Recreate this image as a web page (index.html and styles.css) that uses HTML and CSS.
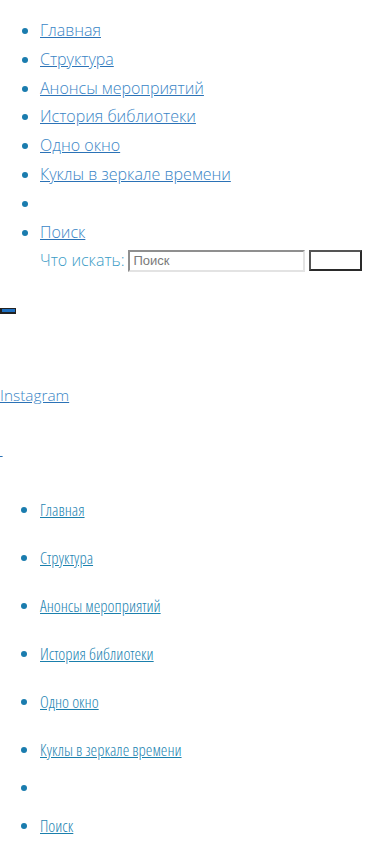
FILE: index.html
```html
<!DOCTYPE html>
<html lang="ru">

<head>
    <meta charset="UTF-8">
    <meta name="viewport" content="width=device-width, initial-scale=1.0">
    <title>Библиотека</title>
    <link rel="stylesheet" href="styles.css">
</head>

<body>
    <ul class="top-menu">
        <li><a href="#">Главная</a></li>
        <li><a href="#">Структура</a></li>
        <li><a href="#">Анонсы мероприятий</a></li>
        <li><a href="#">История библиотеки</a></li>
        <li><a href="#">Одно окно</a></li>
        <li><a href="#">Куклы в зеркале времени</a></li>
        <li></li>
        <li>
            <a href="#">Поиск</a>
            <form class="search">
                <label for="q">Что искать:</label>
                <input id="q" type="text" placeholder="Поиск">
                <button type="submit"></button>
            </form>
        </li>
    </ul>

    <div class="toggle-wrap">
        <button class="toggle" type="button"></button>
    </div>

    <div class="social">
        <a href="#">Instagram</a>
    </div>

    <div class="empty-link">
        <a href="#">&nbsp;</a>
    </div>

    <ul class="main-menu">
        <li><a href="#">Главная</a></li>
        <li><a href="#">Структура</a></li>
        <li><a href="#">Анонсы мероприятий</a></li>
        <li><a href="#">История библиотеки</a></li>
        <li><a href="#">Одно окно</a></li>
        <li><a href="#">Куклы в зеркале времени</a></li>
        <li></li>
        <li><a href="#">Поиск</a></li>
    </ul>
</body>

</html>
```

FILE: styles.css
```css
body {
    margin: 0;
    font-family: "Open Sans", "Liberation Sans", sans-serif;
    font-weight: 300;
    font-size: 16px;
    color: #333;
    background: #fff;
}

a {
    color: #3a85c6;
    text-decoration: underline;
    text-decoration-color: #2b72b6;
}

ul li::marker {
    color: #1a7cae;
}

.top-menu {
    margin: 16px 0;
    padding-left: 40px;
    line-height: 1.8;
}

.search {
    display: flex;
    align-items: center;
    gap: 4px;
    height: 29px;
}

.search label {
    color: #3a9cc6;
}

.search input {
    width: 177px;
    height: 22px;
    box-sizing: border-box;
    margin: 0;
    padding: 1px 3px;
    border: 2px solid #e3e3e3;
    border-top-color: #8f8f8f;
    border-left-color: #8f8f8f;
    font-family: "Liberation Sans", Arial, sans-serif;
    font-size: 13px;
    font-weight: 400;
    color: #333;
}

.search input::placeholder {
    color: #7a7a7a;
    opacity: 1;
}

.search button {
    width: 53px;
    height: 21px;
    margin: 0;
    border: 2px solid #2a2a2a;
    border-left-color: #555;
    border-top-color: #555;
    background: #fff;
}

.toggle-wrap {
    margin-top: 31px;
    height: 6px;
    line-height: 0;
}

.toggle {
    width: 16px;
    height: 6px;
    padding: 0;
    margin: 0;
    border: 1px solid #222;
    border-left-width: 2px;
    border-bottom-width: 2px;
    background: #1e6fc0;
}

.social {
    margin-top: 73px;
    line-height: 22px;
    font-size: 15.4px;
}

.empty-link {
    margin-top: 31px;
    line-height: 22px;
}

.empty-link a {
    font-size: 10px;
}

.main-menu {
    margin: 27px 0 0;
    padding-left: 40px;
    font-family: "Open Sans", "Liberation Sans Narrow", sans-serif;
    font-stretch: 75%;
    font-weight: 300;
    font-size: 16.6px;
    line-height: 21px;
}

.main-menu li {
    margin-bottom: 7px;
}

.main-menu a {
    display: inline-block;
    padding: 10px 0;
    color: #1f86b3;
    text-decoration-color: #1a7fac;
}
```
